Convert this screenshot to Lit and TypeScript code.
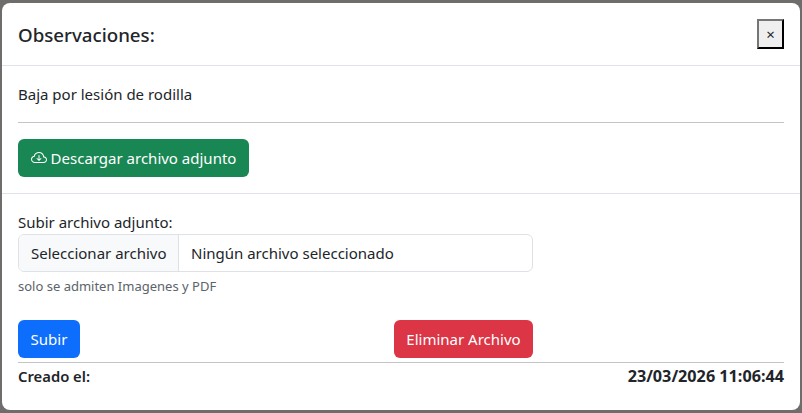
import { LitElement, html, css } from "lit";
import { customElement } from "lit/decorators.js";

@customElement("app-root")
export class AppRoot extends LitElement {
  static styles = css`
    :host {
      display: block;
      height: 413px;
      background: #6f6d6c;
      font-family: "Noto Sans", "Open Sans", sans-serif;
      color: #212529;
      font-size: 15px;
    }
    * { box-sizing: border-box; }
    .backdrop { padding: 3px 2px 3px 2px; height: 413px; display: flex; }
    .modal { flex: 1; background: #fff; border-radius: 8px; display: flex; flex-direction: column; }
    .header {
      height: 63px; flex: none; padding: 0 16px;
      border-bottom: 1px solid #dee2e6;
      display: flex; align-items: center; justify-content: space-between;
    }
    .title { font-size: 18.7px; font-weight: 500; }
    .close {
      width: 27px; height: 30px; padding: 0; margin: 0;
      background: #efefef; border: 2px solid; border-color: #767676 #000 #000 #767676;
      color: #212529; font-size: 15px; line-height: 1; font-family: inherit;
    }
    .section { padding: 0 16px; }
    .top { height: 128px; flex: none; border-bottom: 1px solid #dee2e6; display: flex; flex-direction: column; }
    .obs { margin-top: 16px; line-height: 24px; height: 40px; }
    hr { margin: 0; border: 0; border-top: 1px solid #c4c4c4; }
    .btn {
      display: inline-flex; align-items: center; justify-content: center; gap: 4px;
      height: 38px; border-radius: 6px; color: #fff; border: 0; padding: 0 12px;
      font: inherit; white-space: nowrap;
    }
    .green { background: #198754; width: 231px; margin-top: 16px; }
    .blue { background: #0d6efd; width: 62px; }
    .red { background: #dc3545; width: 139px; }
    .bottom { flex: 1; display: flex; flex-direction: column; }
    .label { margin-top: 16px; line-height: 24px; height: 24px; }
    .form { width: 515px; }
    .file {
      height: 38px; border: 1px solid #dee2e6; border-radius: 6px;
      display: flex; align-items: center; overflow: hidden;
    }
    .pick { height: 100%; background: #f8f9fa; border-right: 1px solid #dee2e6; width: 160px; padding-left: 12px; display: flex; align-items: center; }
    .name { padding-left: 12px; }
    .hint { font-size: 13px; color: #5c636a; margin-top: 4px; line-height: 20px; height: 20px; }
    .actions { display: flex; justify-content: space-between; margin-top: 24px; margin-bottom: 4px; }
    .footer { display: flex; justify-content: space-between; align-items: baseline; font-weight: 700; line-height: 24px; font-size: 16.2px; padding-top: 1px; }
    .footer span:first-child { font-weight: 600; font-size: 14.8px; }
  `;

  render() {
    return html`
      <div class="backdrop">
        <div class="modal">
          <div class="header">
            <div class="title">Observaciones:</div>
            <button class="close">×</button>
          </div>
          <div class="section top">
            <div class="obs">Baja por lesión de rodilla</div>
            <hr />
            <div><button class="btn green">
              <svg width="16" height="16" viewBox="0 0 16 16" fill="currentColor">
                <path d="M4.406 3.342A5.53 5.53 0 0 1 8 2c2.69 0 4.923 2 5.166 4.579C14.758 6.804 16 8.137 16 9.773 16 11.569 14.502 13 12.687 13H3.781C1.708 13 0 11.366 0 9.318c0-1.763 1.266-3.223 2.942-3.593.143-.863.698-1.723 1.464-2.383zm.653.757c-.757.653-1.153 1.44-1.153 2.056v.448l-.445.049C2.064 6.805 1 7.952 1 9.318 1 10.785 2.23 12 3.781 12h8.906C13.98 12 15 10.988 15 9.773c0-1.216-1.02-2.228-2.313-2.228h-.5v-.5C12.188 4.825 10.328 3 8 3a4.53 4.53 0 0 0-2.941 1.1z"/>
                <path d="M7.646 10.854a.5.5 0 0 0 .708 0l2-2a.5.5 0 0 0-.708-.708L8.5 9.293V5.5a.5.5 0 0 0-1 0v3.793L6.354 8.146a.5.5 0 1 0-.708.708l2 2z"/>
              </svg>
              Descargar archivo adjunto
            </button></div>
          </div>
          <div class="section bottom">
            <div class="form">
              <div class="label">Subir archivo adjunto:</div>
              <div class="file">
                <div class="pick">Seleccionar archivo</div>
                <div class="name">Ningún archivo seleccionado</div>
              </div>
              <div class="hint">solo se admiten Imagenes y PDF</div>
              <div class="actions">
                <button class="btn blue">Subir</button>
                <button class="btn red">Eliminar Archivo</button>
              </div>
            </div>
            <hr />
            <div class="footer"><span>Creado el:</span><span>23/03/2026 11:06:44</span></div>
          </div>
        </div>
      </div>
    `;
  }
}
